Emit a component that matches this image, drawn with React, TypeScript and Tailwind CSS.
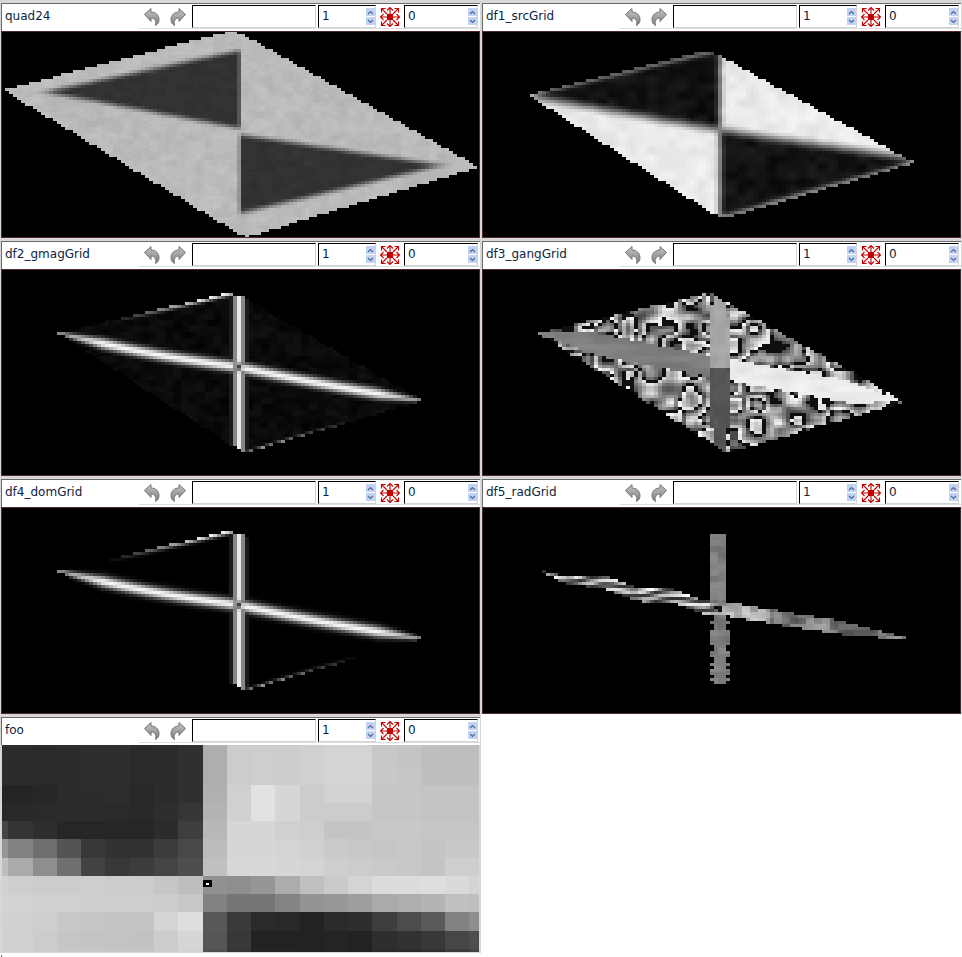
import React from "react";

type P = [number, number];
const W = 479;
const H = 207;

const clamp = (t: number) => Math.max(0, Math.min(1, t));
const sstep = (d: number, w: number) => {
  const t = clamp((d + w / 2) / w);
  return t * t * (3 - 2 * t);
};
const gauss = (d: number, s: number) => Math.exp(-(d * d) / (2 * s * s));
const yLine = (x: number, a: P, b: P) => a[1] + ((x - a[0]) * (b[1] - a[1])) / (b[0] - a[0]);
const hash = (x: number, y: number) => {
  const s = Math.sin(x * 127.1 + y * 311.7) * 43758.5453;
  return s - Math.floor(s);
};
const vnoise = (x: number, y: number) => {
  const xi = Math.floor(x);
  const yi = Math.floor(y);
  const fx = x - xi;
  const fy = y - yi;
  const u = fx * fx * (3 - 2 * fx);
  const v = fy * fy * (3 - 2 * fy);
  const a = hash(xi, yi);
  const b = hash(xi + 1, yi);
  const c = hash(xi, yi + 1);
  const d = hash(xi + 1, yi + 1);
  return a + (b - a) * u + (c - a) * v + (a - b - c + d) * u * v;
};
const inPoly = (x: number, y: number, poly: P[]) => {
  let inside = false;
  for (let i = 0, j = poly.length - 1; i < poly.length; j = i++) {
    const [xi, yi] = poly[i];
    const [xj, yj] = poly[j];
    if (yi > y !== yj > y && x < ((xj - xi) * (y - yi)) / (yj - yi) + xi) inside = !inside;
  }
  return inside;
};

const quad24 = (x: number, y: number) => {
  const poly: P[] = [[2, 59], [218, 3], [231, 0], [242, 3], [478, 136], [250, 205], [244, 206], [238, 203]];
  if (!inPoly(x, y, poly)) return 0;
  const n = (vnoise(x / 9, y / 7) - 0.5) * 14 + (hash(Math.floor(x / 4), Math.floor(y / 3)) - 0.5) * 6;
  const d1L = y - yLine(x, [39, 61], [238, 98]);
  const topL = y - yLine(x, [39, 61], [232, 20]);
  const d1R = y - yLine(x, [240, 103], [446, 134]);
  const botR = yLine(x, [244, 182], [446, 134]) - y;
  const darkA = sstep(-d1L - 1, 9) * sstep(topL - 1, 9) * sstep(238.5 - x, 3);
  const darkB = sstep(d1R - 1, 9) * sstep(botR - 1, 9) * sstep(x - 238.5, 3);
  const t = Math.max(darkA, darkB);
  return 186 + n - (136 + n * 0.6) * t;
};

const df1 = (x: number, y: number) => {
  const poly: P[] = [[46, 64], [212, 22], [228, 21], [240, 26], [433, 132], [248, 186], [241, 187], [228, 181]];
  if (!inPoly(x, y, poly)) return 0;
  const d1 = y - (x < 237 ? yLine(x, [46, 65], [237, 99]) : yLine(x, [237, 99], [433, 128]));
  const d2 = x - 238;
  const s1 = sstep(d1, 17);
  const s2 = sstep(d2, 13);
  const t = s1 * (1 - s2) + (1 - s1) * s2;
  const base = 18 + 216 * t + (vnoise(x / 10, y / 8) - 0.5) * 20;
  const topD = y - yLine(x, [46, 64], [228, 21]);
  const botD = yLine(x, [241, 187], [433, 132]) - y;
  const rim = x < 238 && d1 < 0 ? 80 * gauss(topD, 2) : x > 240 && d1 > 0 ? 110 * gauss(botD, 2.5) : 0;
  return base + rim;
};

const gradBase = (x: number, y: number, inner: boolean) => {
  const poly: P[] = [[57, 64], [214, 27], [228, 24], [240, 27], [422, 132], [250, 182], [244, 183], [235, 179]];
  if (!inPoly(x, y, poly)) return 0;
  const sag = x < 237 ? 3 * Math.sin((Math.PI * (x - 57)) / 180) : 1.5 * Math.sin((Math.PI * (x - 237)) / 185);
  const d1 = y - sag - (x < 237 ? yLine(x, [57, 64], [237, 98]) : yLine(x, [237, 98], [422, 132]));
  const taper = clamp((x < 237 ? x - 57 : 422 - x) / 45);
  const g1 = 245 * gauss(d1, 1.4 + 2.5 * taper) * (0.55 + 0.45 * taper);
  const g2 = 235 * gauss(x - 238, 3.8);
  const r2 = (x - 237) * (x - 237) + (y - 98) * (y - 98);
  const mid = 1 - 0.8 * Math.exp(-r2 / 14);
  const topD = y - yLine(x, [57, 64], [228, 24]);
  const botD = yLine(x, [244, 186], [422, 132]) - y;
  const topE = x < 232 ? 240 * gauss(topD, 2.2) * clamp((x - 106) / 95) : 0;
  const botE = x > 244 ? 225 * gauss(botD, 2.2) * clamp((358 - x) / 85) : 0;
  const bg = inner ? 2 + vnoise(x / 8, y / 6) * 16 : 0;
  return Math.max(bg, g1 * mid, g2 * mid, topE, botE);
};
const df2 = (x: number, y: number) => gradBase(x, y, true);
const df4 = (x: number, y: number) => gradBase(x, y, false);

const df3 = (x: number, y: number) => {
  const poly: P[] = [[56, 64], [228, 24], [423, 133], [245, 184]];
  if (!inPoly(x, y, poly)) return 0;
  const dL = y - yLine(x, [56, 64], [237, 99]);
  const dR = y - yLine(x, [237, 99], [423, 133]);
  const upW = Math.min(11, 5 + (y - 24) / 6);
  const loW = Math.min(12, 4 + (184 - y) / 6);
  if (Math.abs(x - 237) < upW && y < 99 && y > 24) return 165 + (vnoise(x / 6, y / 9) - 0.5) * 16;
  if (Math.abs(x - 238) < loW && y >= 99) return 84 + (vnoise(x / 6, y / 9) - 0.5) * 14;
  if (x < 237 && Math.abs(dL) < Math.min(11, (x - 56) / 5)) return 125 + (vnoise(x / 20, y / 6) - 0.5) * 22;
  if (x >= 237 && Math.abs(dR) < Math.min(11, (423 - x) / 5)) return 235 + (vnoise(x / 20, y / 6) - 0.5) * 22;
  const f = vnoise(x / 21, y / 15) * 2.6 + vnoise(x / 9, y / 7) * 0.6;
  const v = f - Math.floor(f);
  if (v < 0.2) return 14;
  return 70 + (v - 0.2) * 220;
};

const df5 = (x: number, y: number) => {
  const r2 = (x - 237) * (x - 237) + (y - 101) * (y - 101);
  const core = r2 < 12 ? 0.1 : 1;
  const nx = vnoise(x / 8, y / 6);
  const wav = 2.2 * Math.sin(x / 11);
  if (x >= 60 && x <= 422) {
    const left = x < 237;
    const cy = (left ? yLine(x, [61, 66], [237, 101]) : yLine(x, [237, 101], [421, 131])) + (left ? wav : 0);
    const hw = Math.min(7, Math.abs(left ? x - 58 : 424 - x) / 12 + 1.2);
    if (Math.abs(y - cy) < hw) {
      if (left) {
        const sw = 0.5 + 0.5 * Math.sin(x / 5.5 + (y - cy) * 0.7);
        return (50 + 195 * sw * (0.5 + nx * 0.7)) * core;
      }
      return (70 + 100 * nx + 45 * (x < 290 ? 1 : 0)) * core;
    }
  }
  if (y > 27 && y < 176) {
    const cx = y < 101 ? 236 : 238;
    const tw = Math.min(8, Math.abs(101 - y) / 1.2 + 0.5);
    const jag = (hash(Math.floor(y / 3), 7) - 0.5) * 4;
    if (Math.abs(x - cx) < tw + jag) return (108 + nx * 34) * core;
  }
  return 0;
};

const buildPaths = (fn: (x: number, y: number) => number) => {
  const cw = 4;
  const ch = 3;
  const levels = new Map<number, string>();
  for (let r = 0; r * ch < H; r++) {
    let c = 0;
    const cols = Math.ceil(W / cw);
    while (c < cols) {
      const lv = Math.round(Math.max(0, Math.min(255, fn(c * cw + 2, r * ch + 1.5))) / 3) * 3;
      let e = c + 1;
      while (e < cols && Math.round(Math.max(0, Math.min(255, fn(e * cw + 2, r * ch + 1.5))) / 3) * 3 === lv) e++;
      if (lv > 2) {
        const s = levels.get(lv) ?? "";
        levels.set(lv, s + `M${c * cw} ${r * ch}h${(e - c) * cw}v${ch}h${-(e - c) * cw}z`);
      }
      c = e;
    }
  }
  return Array.from(levels.entries());
};

function Field({ fn }: { fn: (x: number, y: number) => number }) {
  const paths = React.useMemo(() => buildPaths(fn), [fn]);
  return (
    <svg width={W} height={H} viewBox={`0 0 ${W} ${H}`} shapeRendering="crispEdges" className="block bg-black outline outline-1 -outline-offset-1 outline-[#4f2a2a]">
      {paths.map(([lv, d]) => (
        <path key={lv} d={d} fill={`rgb(${lv},${lv},${lv})`} />
      ))}
    </svg>
  );
}

const fooX = [2, 8, 33, 57, 81, 105, 130, 154, 178, 203, 227, 251, 275, 300, 324, 348, 372, 397, 421, 445, 469, 479];
const fooY = [745, 747, 767, 785, 803, 821, 839, 858, 876, 894, 912, 931, 949, 952];
const fooV = [
  [46, 46, 44, 46, 48, 48, 44, 46, 50, 176, 204, 205, 205, 208, 210, 210, 200, 198, 195, 190, 190],
  [44, 44, 42, 44, 46, 46, 42, 44, 48, 174, 204, 206, 205, 208, 212, 212, 200, 196, 190, 190, 190],
  [44, 44, 42, 44, 46, 46, 42, 44, 48, 174, 204, 206, 205, 208, 212, 212, 200, 198, 190, 190, 190],
  [36, 36, 38, 44, 44, 46, 40, 44, 48, 176, 208, 226, 214, 204, 210, 210, 198, 198, 196, 196, 196],
  [40, 40, 42, 44, 44, 42, 40, 46, 54, 180, 208, 226, 214, 204, 204, 204, 198, 198, 196, 196, 196],
  [70, 52, 46, 38, 38, 38, 38, 44, 62, 184, 214, 214, 208, 206, 196, 196, 200, 200, 198, 198, 198],
  [150, 130, 110, 84, 56, 50, 50, 60, 72, 188, 214, 214, 212, 208, 202, 200, 198, 200, 196, 200, 200],
  [190, 170, 142, 112, 66, 56, 60, 68, 78, 192, 216, 216, 214, 212, 206, 204, 202, 200, 196, 206, 206],
  [210, 206, 204, 204, 206, 204, 204, 198, 190, 145, 142, 150, 172, 192, 202, 212, 220, 220, 222, 218, 212],
  [212, 210, 208, 208, 206, 206, 206, 204, 200, 130, 118, 118, 132, 148, 152, 158, 170, 174, 180, 192, 190],
  [210, 208, 206, 200, 198, 196, 196, 212, 222, 88, 58, 42, 40, 34, 42, 46, 62, 76, 90, 130, 142],
  [208, 208, 204, 198, 196, 196, 194, 204, 214, 86, 56, 34, 34, 34, 36, 34, 46, 50, 56, 70, 78],
  [208, 208, 204, 200, 200, 198, 198, 204, 212, 80, 54, 38, 36, 34, 36, 34, 44, 44, 50, 60, 68],
];

function Foo() {
  return (
    <div className="relative">
      <svg width={W} height={H} viewBox={`0 0 ${W} ${H}`} shapeRendering="crispEdges" className="block bg-[#d8d8d8]">
        {fooV.map((row, r) =>
          row.map((v, c) => (
            <rect
              key={`${r}-${c}`}
              x={fooX[c] - 1}
              y={fooY[r] - 745}
              width={fooX[c + 1] - fooX[c]}
              height={fooY[r + 1] - fooY[r]}
              fill={`rgb(${v},${v},${v})`}
            />
          ))
        )}
      </svg>
      <div className="absolute left-[202px] top-[135px] flex h-[7px] w-[9px] items-center justify-center bg-black">
        <div className="h-[2px] w-[3px] bg-white" />
      </div>
    </div>
  );
}

function Arrow({ flip, id }: { flip?: boolean; id: string }) {
  return (
    <svg width="18" height="20" viewBox="0 0 18 20" className="block">
      <defs>
        <linearGradient id={id} x1="0" y1="0" x2="0" y2="1">
          <stop offset="0" stopColor="#c4c4c4" />
          <stop offset="1" stopColor="#7e7e7e" />
        </linearGradient>
      </defs>
      <g transform={flip ? "translate(18,0) scale(-1,1)" : undefined}>
        <path
          d="M1.5 7.5 L8 1.5 L8 5 C12.5 5 16 8 16 12.5 C16 15 15 17.2 12.5 18.5 C13.6 14.5 12 11 8 11 L8 14.5 Z"
          fill={`url(#${id})`}
          stroke="#757575"
          strokeWidth="1"
          strokeLinejoin="round"
        />
      </g>
    </svg>
  );
}

function Explode() {
  const c = "#c40000";
  const dirs: [number, number][] = [[1, 0], [-1, 0], [0, 1], [0, -1], [1, 1], [-1, 1], [1, -1], [-1, -1]];
  return (
    <svg width="20" height="20" viewBox="-10 -10 20 20" className="block">
      <rect x="-3" y="-3" width="6" height="6" fill={c} />
      {dirs.map(([dx, dy], i) => {
        const diag = dx !== 0 && dy !== 0;
        const len = diag ? 8.5 : 9.5;
        const ex = dx * len;
        const ey = dy * len;
        const a = diag ? 4 : 3;
        const h1: P = diag ? [ex - dx * a, ey] : dx ? [ex - dx * a, a] : [a, ey - dy * a];
        const h2: P = diag ? [ex, ey - dy * a] : dx ? [ex - dx * a, -a] : [-a, ey - dy * a];
        return (
          <path
            key={i}
            d={`M${dx * 3} ${dy * 3}L${ex} ${ey}M${h1[0]} ${h1[1]}L${ex} ${ey}L${h2[0]} ${h2[1]}`}
            stroke={c}
            strokeWidth="1.1"
            fill="none"
          />
        );
      })}
    </svg>
  );
}

function Chevron({ up }: { up?: boolean }) {
  return (
    <svg width="7" height="5" viewBox="0 0 7 5" className="block">
      <path d={up ? "M1 4L3.5 1.5L6 4" : "M1 1L3.5 3.5L6 1"} stroke="#4a6a9a" strokeWidth="1.2" fill="none" />
    </svg>
  );
}

function Spin({ value, className }: { value: string; className: string }) {
  return (
    <div className={`flex h-[23px] border-t border-l border-t-black border-l-black border-r border-b border-r-[#d4d4d4] border-b-[#d4d4d4] bg-white ${className}`}>
      <div className="flex-1 pl-[3px] text-[12px] leading-[20px] text-[#0b2440]">{value}</div>
      <div className="flex w-[9px] flex-col gap-[1px] py-[2px]">
        <div className="flex h-[8px] items-center justify-center bg-[#c2d2f2]">
          <Chevron up />
        </div>
        <div className="flex flex-1 items-center justify-center bg-[#c2d2f2]">
          <Chevron />
        </div>
      </div>
    </div>
  );
}

function Panel({ title, idx, children }: { title: string; idx: string; children: React.ReactNode }) {
  return (
    <div className="h-[238px] w-[481px] bg-[#d8d8d8] pt-[3px] pl-[1px] pr-[1px]">
      <div className="flex h-[28px] border-t border-l border-t-[#6a6a6a] border-l-[#6a6a6a] bg-white">
        <div className="flex w-[137px] items-start pl-[3px] pt-[3px] text-[12px] leading-[18px] text-[#0b2440]">{title}</div>
        <div className="flex-1">
          <div className="flex h-[23px] mt-[1px] items-stretch border-b border-b-[#dcdcdc] box-content">
            <div className="flex w-[26px] items-center justify-center">
              <Arrow id={`u${idx}`} />
            </div>
            <div className="flex w-[26px] items-center justify-center">
              <Arrow flip id={`r${idx}`} />
            </div>
            <div className="ml-[1px] h-[23px] w-[124px] border-t border-l border-t-black border-l-black border-r border-b border-r-[#d4d4d4] border-b-[#d4d4d4] bg-white" />
            <Spin value="1" className="ml-[2px] w-[58px]" />
            <div className="ml-[1px] flex w-[26px] items-center justify-center">
              <Explode />
            </div>
            <Spin value="0" className="ml-[1px] w-[74px]" />
          </div>
        </div>
      </div>
      {children}
    </div>
  );
}

export default function App() {
  return (
    <div className="h-[957px] w-[962px] overflow-hidden bg-white font-['DejaVu_Sans',sans-serif]">
      <div className="grid grid-cols-[481px_481px]">
        <Panel title="quad24" idx="a"><Field fn={quad24} /></Panel>
        <Panel title="df1_srcGrid" idx="b"><Field fn={df1} /></Panel>
        <Panel title="df2_gmagGrid" idx="c"><Field fn={df2} /></Panel>
        <Panel title="df3_gangGrid" idx="d"><Field fn={df3} /></Panel>
        <Panel title="df4_domGrid" idx="e"><Field fn={df4} /></Panel>
        <Panel title="df5_radGrid" idx="f"><Field fn={df5} /></Panel>
        <Panel title="foo" idx="g"><Foo /></Panel>
      </div>
      <div className="h-[1px] w-[481px] bg-[#d8d8d8]" />
      <div className="mt-[2px] ml-[1px] h-[2px] w-[1px] bg-[#6a6a6a]" />
    </div>
  );
}
